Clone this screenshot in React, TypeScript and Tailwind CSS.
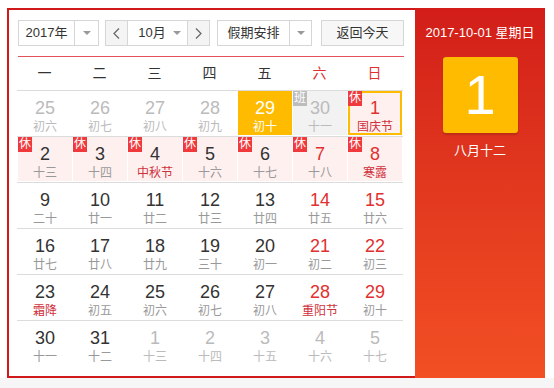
import React from "react";

type Cell = {
  d: number;
  l: string;
  other?: boolean;
  red?: boolean;
  lred?: boolean;
  rest?: boolean;
  work?: boolean;
  today?: boolean;
  sel?: boolean;
};

const rows: Cell[][] = [
  [
    { d: 25, l: "初六", other: true },
    { d: 26, l: "初七", other: true },
    { d: 27, l: "初八", other: true },
    { d: 28, l: "初九", other: true },
    { d: 29, l: "初十", other: true, today: true },
    { d: 30, l: "十一", other: true, work: true },
    { d: 1, l: "国庆节", red: true, lred: true, rest: true, sel: true },
  ],
  [
    { d: 2, l: "十三", rest: true },
    { d: 3, l: "十四", rest: true },
    { d: 4, l: "中秋节", rest: true, lred: true },
    { d: 5, l: "十六", rest: true },
    { d: 6, l: "十七", rest: true },
    { d: 7, l: "十八", rest: true, red: true },
    { d: 8, l: "寒露", rest: true, red: true, lred: true },
  ],
  [
    { d: 9, l: "二十" },
    { d: 10, l: "廿一" },
    { d: 11, l: "廿二" },
    { d: 12, l: "廿三" },
    { d: 13, l: "廿四" },
    { d: 14, l: "廿五", red: true },
    { d: 15, l: "廿六", red: true },
  ],
  [
    { d: 16, l: "廿七" },
    { d: 17, l: "廿八" },
    { d: 18, l: "廿九" },
    { d: 19, l: "三十" },
    { d: 20, l: "初一" },
    { d: 21, l: "初二", red: true },
    { d: 22, l: "初三", red: true },
  ],
  [
    { d: 23, l: "霜降", lred: true },
    { d: 24, l: "初五" },
    { d: 25, l: "初六" },
    { d: 26, l: "初七" },
    { d: 27, l: "初八" },
    { d: 28, l: "重阳节", red: true, lred: true },
    { d: 29, l: "初十", red: true },
  ],
  [
    { d: 30, l: "十一" },
    { d: 31, l: "十二" },
    { d: 1, l: "十三", other: true },
    { d: 2, l: "十四", other: true },
    { d: 3, l: "十五", other: true },
    { d: 4, l: "十六", other: true },
    { d: 5, l: "十七", other: true },
  ],
];

const Arrow = () => (
  <svg width="8" height="5" viewBox="0 0 8 5">
    <path d="M0 0 L8 0 L4 4 Z" fill="#999" />
  </svg>
);

const Chev = ({ dir }: { dir: "l" | "r" }) => (
  <svg width="7" height="11" viewBox="0 0 7 11">
    <path
      d={dir === "l" ? "M6 0.5 L1 5.5 L6 10.5" : "M1 0.5 L6 5.5 L1 10.5"}
      stroke="#666"
      strokeWidth="1.2"
      fill="none"
    />
  </svg>
);

function DayCell({ c }: { c: Cell }) {
  let bg = "bg-white";
  if (c.today) bg = "bg-[#ffbb00]";
  else if (c.work) bg = "bg-[#f2f2f2]";
  else if (c.rest) bg = "bg-[#fff0f0]";
  let numColor = "text-[#333]";
  let lunColor = "text-[#999]";
  if (c.other) {
    numColor = "text-[#bbb]";
    lunColor = "text-[#bbb]";
  }
  if (c.red) numColor = "text-[#e0302f]";
  if (c.lred) lunColor = "text-[#d0303a]";
  if (c.today) {
    numColor = "text-white";
    lunColor = "text-white";
  }
  return (
    <div className="w-[55px] h-[45px] pl-px pb-px relative">
      <div
        className={`w-full h-full ${bg} ${c.sel ? "border-2 border-[#ffbb00]" : ""} flex flex-col items-center justify-start`}
      >
        <div
          className={`text-[18px] leading-[20px] ${numColor} ${c.sel ? "mt-[5px]" : "mt-[7px]"}`}
        >
          {c.d}
        </div>
        <div className={`text-[12px] leading-[16px] mt-[1px] ${lunColor}`}>{c.l}</div>
      </div>
      {c.rest && (
        <div className="absolute left-px top-0 w-[14px] h-[15px] bg-[#f0393c] text-white text-[12px] leading-[15px] text-center">
          休
        </div>
      )}
      {c.work && (
        <div className="absolute left-px top-0 w-[14px] h-[15px] bg-[#bcbcbc] text-white text-[12px] leading-[15px] text-center">
          班
        </div>
      )}
    </div>
  );
}

export default function App() {
  const weeks = ["一", "二", "三", "四", "五", "六", "日"];
  return (
    <div
      className="w-[554px] h-[388px] bg-[#f6f6f6]"
      style={{ fontFamily: '"Liberation Sans", Arial, "Noto Sans CJK SC", sans-serif' }}
    >
      <div className="h-[378px] bg-white pt-[8px] pl-[7px]">
        <div className="flex w-[538px] h-[370px]">
          <div className="w-[408px] h-full border-2 border-r-0 border-[#d0191a] bg-white pl-[9px] pt-[10px]">
            {/* controls */}
            <div className="flex items-center h-[26px] text-[13px] text-[#333]">
              <div className="flex w-[81px] h-[26px] border border-[#d6d6d6] bg-white">
                <div className="w-[55px] flex items-center justify-center">2017年</div>
                <div className="flex-1 border-l border-[#d6d6d6] flex items-center justify-center">
                  <Arrow />
                </div>
              </div>
              <div className="flex ml-[6px] w-[105px] h-[26px] border border-[#d6d6d6] bg-white">
                <div className="w-[22px] bg-[#f4f4f4] border-r border-[#d6d6d6] flex items-center justify-center">
                  <Chev dir="l" />
                </div>
                <div className="flex-1 flex items-center justify-center gap-[7px] pl-[4px]">
                  <span>10月</span>
                  <Arrow />
                </div>
                <div className="w-[22px] bg-[#f4f4f4] border-l border-[#d6d6d6] flex items-center justify-center">
                  <Chev dir="r" />
                </div>
              </div>
              <div className="flex ml-[7px] w-[95px] h-[26px] border border-[#d6d6d6] bg-white">
                <div className="w-[71px] flex items-center justify-center">假期安排</div>
                <div className="flex-1 border-l border-[#d6d6d6] flex items-center justify-center">
                  <Arrow />
                </div>
              </div>
              <div className="ml-[9px] w-[83px] h-[26px] border border-[#d6d6d6] bg-[#f7f7f7] flex items-center justify-center">
                返回今天
              </div>
            </div>
            {/* red line */}
            <div className="w-[386px] h-px bg-[#e3525b] mt-[10px]" />
            {/* week header */}
            <div className="flex w-[386px] h-[33px] -ml-px">
              {weeks.map((w, i) => (
                <div
                  key={w}
                  className={`w-[55px] flex items-center justify-center text-[14px] ${i >= 5 ? "text-[#e0302f]" : "text-[#333]"}`}
                >
                  {w}
                </div>
              ))}
            </div>
            {/* grid */}
            <div className="w-[386px] -ml-px">
              {rows.map((r, ri) => (
                <div key={ri} className={`flex ${ri < 6 ? "border-t border-[#dcdcdc]" : ""}`}>
                  {r.map((c, ci) => (
                    <DayCell key={ci} c={c} />
                  ))}
                </div>
              ))}
            </div>
          </div>
          <div className="w-[130px] h-[370px] bg-gradient-to-b from-[#d21d19] to-[#f24f24] flex flex-col items-center">
            <div className="mt-[17px] text-[13px] text-white leading-[16px]">2017-10-01 星期日</div>
            <div className="mt-[16px] w-[75px] h-[76px] bg-[#ffbb00] rounded-[3px] flex items-center justify-center text-white text-[56px] leading-none shadow-[0_2px_2px_rgba(0,0,0,0.15)]">
              1
            </div>
            <div className="mt-[8px] text-[13px] text-white">八月十二</div>
          </div>
        </div>
      </div>
    </div>
  );
}
